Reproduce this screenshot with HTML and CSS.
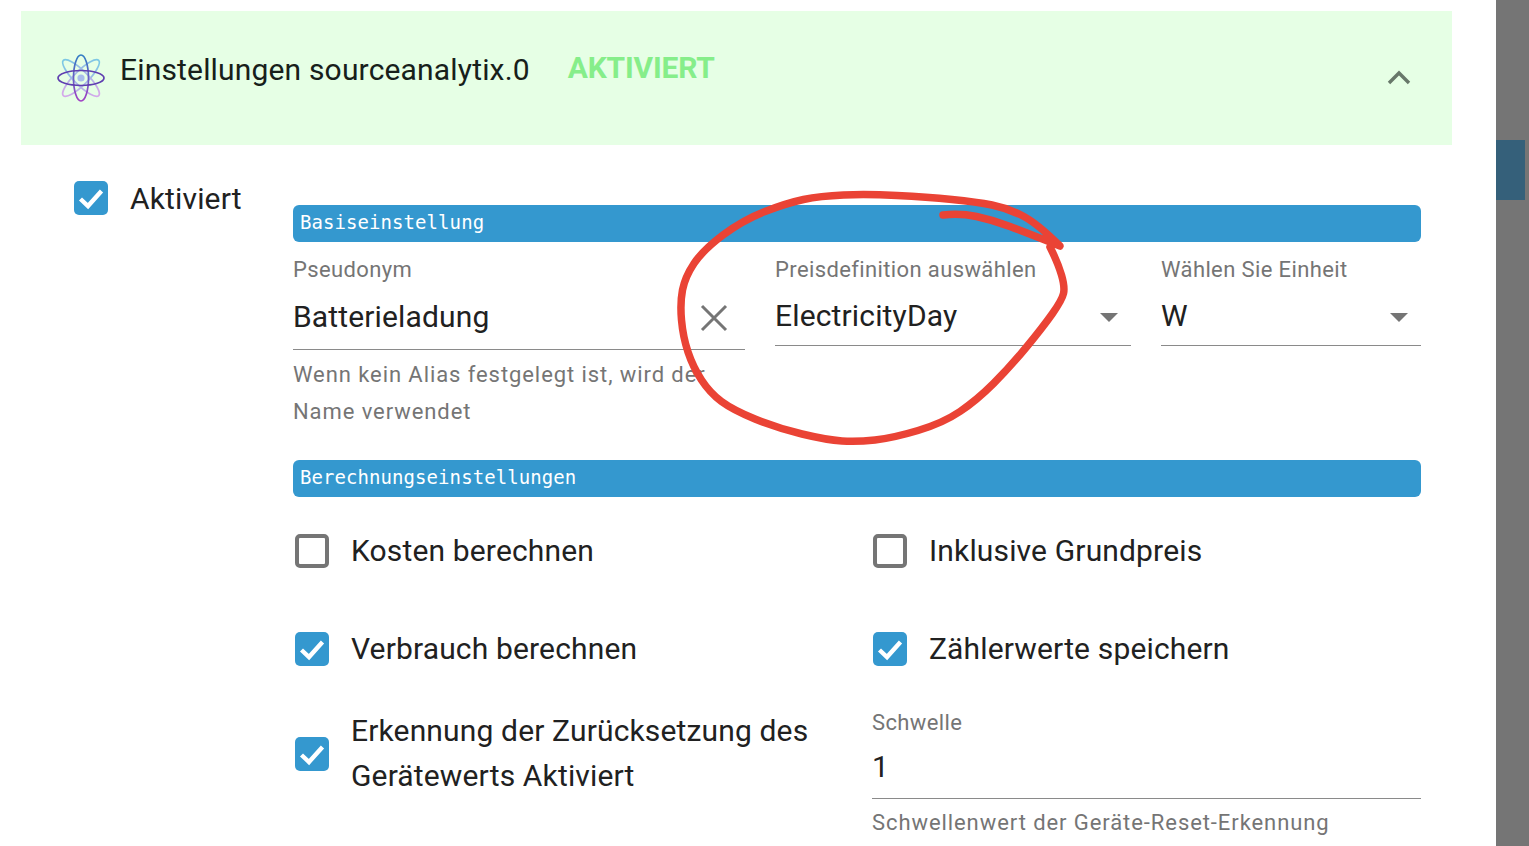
FILE: index.html
```html
<!DOCTYPE html>
<html lang="de">
<head>
<meta charset="utf-8">
<title>Einstellungen sourceanalytix.0</title>
<link rel="stylesheet" href="styles.css">
</head>
<body>
<div class="screen">
  <main class="dialog">
    <header class="head">
      <svg class="logo" viewBox="0 0 48 48" width="48" height="48" fill="none" stroke-width="1.7">
        <defs>
          <linearGradient id="g" x1="0" y1="0" x2="0" y2="48" gradientUnits="userSpaceOnUse"><stop offset="0" stop-color="#2f7fc4"/><stop offset="1" stop-color="#a33fc4"/></linearGradient>
          <linearGradient id="gl" x1="0" y1="0" x2="0" y2="48" gradientUnits="userSpaceOnUse"><stop offset="0" stop-color="#7cc8e4"/><stop offset="1" stop-color="#d4a8ea"/></linearGradient>
        </defs>
        <ellipse cx="24" cy="24" rx="7" ry="25" transform="rotate(45 24 24)" stroke="url(#gl)"/>
        <ellipse cx="24" cy="24" rx="7" ry="25" transform="rotate(-45 24 24)" stroke="url(#gl)"/>
        <ellipse cx="24" cy="24" rx="7.5" ry="23" stroke="url(#g)"/>
        <ellipse cx="24" cy="24" rx="23" ry="7.5" stroke="#5f3fb0"/>
        <circle cx="24" cy="24" r="3.6" fill="#a9bdec"/>
      </svg>
      <span class="title">Einstellungen sourceanalytix.0</span>
      <span class="status">AKTIVIERT</span>
      <svg class="chevron" viewBox="0 0 24 16" width="24" height="16" fill="none" stroke="#68786a" stroke-width="3.4"><path d="M2 14 12 4l10 10"/></svg>
    </header>

    <div class="body">
      <label class="check enable">
        <span class="box on"><svg viewBox="0 0 34 34"><path d="M6.5 18 14 25 27.5 10"/></svg></span>
        <span>Aktiviert</span>
      </label>

      <div class="form">
        <h2 class="bar">Basiseinstellung</h2>
        <div class="fields">
          <div class="field alias">
            <div class="label">Pseudonym</div>
            <div class="input tall">
              <span>Batterieladung</span>
              <svg class="clear" viewBox="0 0 28 28" width="28" height="28" fill="none" stroke="#757575" stroke-width="3"><path d="M2 2l24 24M26 2 2 26"/></svg>
            </div>
            <p class="help">Wenn kein Alias festgelegt ist, wird der<br>Name verwendet</p>
          </div>
          <div class="field price">
            <div class="label">Preisdefinition auswählen</div>
            <div class="input"><span>ElectricityDay</span><i class="caret"></i></div>
          </div>
          <div class="field unit">
            <div class="label">Wählen Sie Einheit</div>
            <div class="input"><span>W</span><i class="caret"></i></div>
          </div>
        </div>

        <h2 class="bar second">Berechnungseinstellungen</h2>
        <div class="options">
          <label class="check"><span class="box"></span><span>Kosten berechnen</span></label>
          <label class="check"><span class="box"></span><span>Inklusive Grundpreis</span></label>
          <label class="check"><span class="box on"><svg viewBox="0 0 34 34"><path d="M6.5 18 14 25 27.5 10"/></svg></span><span>Verbrauch berechnen</span></label>
          <label class="check"><span class="box on"><svg viewBox="0 0 34 34"><path d="M6.5 18 14 25 27.5 10"/></svg></span><span>Zählerwerte speichern</span></label>
          <label class="check multi"><span class="box on"><svg viewBox="0 0 34 34"><path d="M6.5 18 14 25 27.5 10"/></svg></span><span>Erkennung der Zurücksetzung des Gerätewerts Aktiviert</span></label>
          <div class="field threshold">
            <div class="label">Schwelle</div>
            <div class="input short"><span>1</span></div>
            <p class="help">Schwellenwert der Geräte-Reset-Erkennung</p>
          </div>
        </div>
      </div>
    </div>
  </main>

  <aside class="scrollbar"><div class="thumb"></div></aside>

  <svg class="scribble" viewBox="0 0 1529 846" width="1529" height="846" fill="none" stroke="#ea4335" stroke-width="7.5" stroke-linecap="round" stroke-linejoin="round">
    <path d="M943 215Q960 213 976.5 216.5Q993 220 1010 226.5Q1027 233 1060 246Q1037 223 1022 215.5Q1007 208 992 205Q977 202 952 199.5Q927 197 897 195.5Q867 194 843.5 195Q820 196 803.5 199.5Q787 203 765 211.5Q743 220 723 235Q703 250 694 263.5Q685 277 682.5 290Q680 303 681.5 320Q683 337 688 352Q693 367 701.5 380Q710 393 721.5 401.5Q733 410 755 419Q777 428 802 434Q827 440 842 441Q857 442 875 440Q893 438 918 430.5Q943 423 960 411.5Q977 400 993.5 383.5Q1010 367 1026.5 347Q1043 327 1052.5 313.5Q1062 300 1063.5 293.5Q1065 287 1061.5 275Q1058 263 1050 247"/>
  </svg>
</div>
</body>
</html>
```
FILE: styles.css
```css
* { box-sizing: border-box; }
html, body { margin: 0; padding: 0; background: #fff; }
body { font-family: Roboto, "Liberation Sans", sans-serif; color: #212121; }

.screen { position: relative; width: 1529px; height: 846px; overflow: hidden; display: flex; }
.dialog { width: 1496px; flex: none; padding: 11px 44px 0 21px; }
.scrollbar { width: 33px; flex: none; background: #757575; padding-top: 140px; }
.thumb { width: 29px; height: 60px; background: #35607a; }
.scribble { position: absolute; left: 0; top: 0; pointer-events: none; }

.head { height: 134px; background: #e6ffe5; display: flex; align-items: flex-start; padding: 42px 41px 0 36px; }
.logo { margin-right: 15px; margin-top: 1px; flex: none; overflow: visible; }
.title { font-size: 30px; line-height: 34px; margin-top: 0; color: #17201a; letter-spacing: .17px; }
.status { font-size: 30px; line-height: 32px; font-weight: 700; color: #86ee8a; margin-left: 38px; margin-top: -1px; letter-spacing: -.2px; }
.chevron { margin-left: auto; margin-top: 16px; }

.body { display: flex; padding-top: 36px; padding-left: 53px; }
.check { display: flex; align-items: center; gap: 22px; font-size: 30px; line-height: 45px; color: #212121; letter-spacing: .15px; }
.enable { width: 219px; height: 34px; flex: none; gap: 22px; }
.box { width: 34px; height: 34px; flex: none; border: 4px solid #757575; border-radius: 5px; display: block; }
.box.on { border: 0; background: #3498cf; }
.box svg { display: block; width: 34px; height: 34px; }
.box path { fill: none; stroke: #fff; stroke-width: 4.4; }

.form { width: 1128px; padding-top: 24px; }
.bar { margin: 0; height: 37px; background: #3498cf; border-radius: 6px; color: #fff; font: 400 19px/35px "DejaVu Sans Mono", monospace; letter-spacing: .07px; padding-left: 7px; }
.second { margin-top: 30px; }

.fields { display: flex; gap: 30px; padding-top: 15px; }
.alias { width: 452px; }
.price { width: 356px; }
.unit { width: 260px; }
.label { font-size: 22px; line-height: 26px; color: #757575; letter-spacing: .38px; }
.input { display: flex; align-items: center; justify-content: space-between; height: 59px; border-bottom: 1px solid #8a8a8a; font-size: 30px; letter-spacing: .15px; margin-top: 4px; padding-bottom: 2px; padding-right: 13px; }
.input.tall { height: 63px; padding-bottom: 4px; padding-right: 17px; }
.input.short { height: 63px; margin-top: 0; }
.clear { flex: none; margin-top: 4px; }
.caret { width: 0; height: 0; margin-top: 4px; border-left: 9px solid transparent; border-right: 9px solid transparent; border-top: 9px solid #757575; }
.help { margin: 6px 0 0; font-size: 22px; line-height: 37px; color: #757575; letter-spacing: .92px; }

.options { display: grid; grid-template-columns: 549px 549px; column-gap: 30px; grid-template-rows: 98px 98px auto; padding-top: 31px; }
.options .check { align-self: start; padding-left: 2px; }
.options .check:nth-child(even) { padding-left: 1px; }
.options .multi { align-self: start; margin-top: -16px; }
.multi .box { margin-top: 2px; }
.threshold { margin-top: -14px; }
.threshold .help { margin-top: 5px; }
```
